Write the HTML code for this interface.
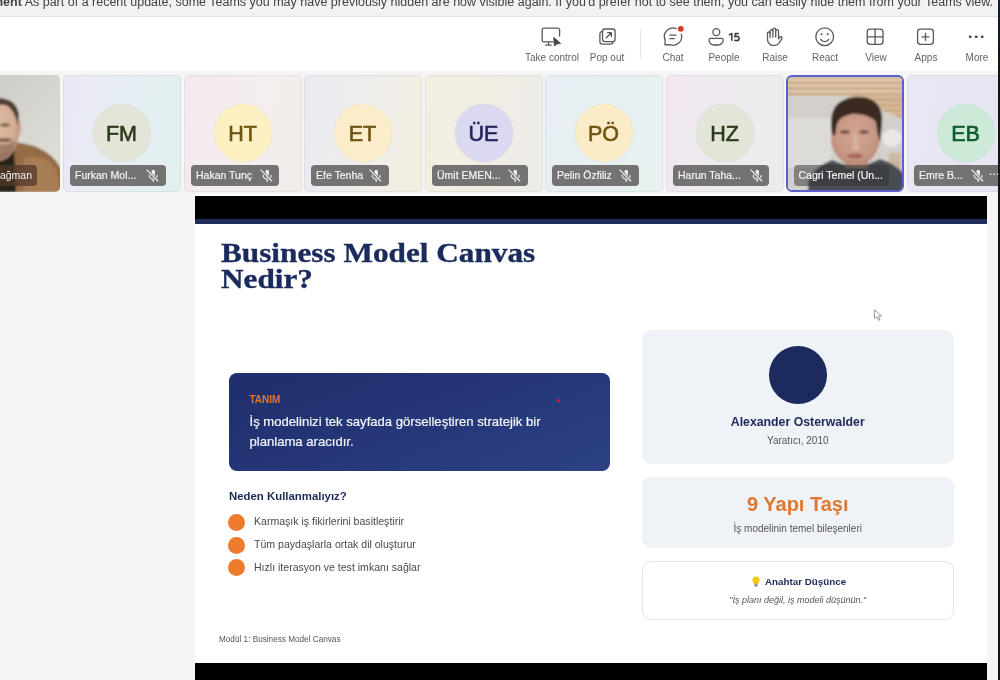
<!DOCTYPE html>
<html><head><meta charset="utf-8">
<style>
*{margin:0;padding:0;box-sizing:border-box}
html,body{width:1000px;height:680px;overflow:hidden;background:#f5f5f5;font-family:"Liberation Sans",sans-serif}
body>*{will-change:transform}
.abs{position:absolute}
#banner{left:0;top:0;width:998px;height:17px;background:#f2f2f2;border-bottom:1px solid #e1e1e1;overflow:hidden}
#banner span{position:absolute;left:-8px;top:-4.4px;font-size:12.5px;line-height:12.5px;color:#424242;white-space:nowrap}
#toolbar{left:0;top:17px;width:998px;height:54px;background:#fff}
.lbl{position:absolute;top:52px;width:80px;margin-left:-40px;text-align:center;font-size:10px;line-height:12px;color:#646464;white-space:nowrap}
#sep{left:640px;top:29px;width:1px;height:29px;background:#e6e6e6}
#rightline{left:997.8px;top:0;width:2.2px;height:680px;background:linear-gradient(180deg,#102038 0px,#141820 30px,#131313 80px,#141414 100%)}
.tile{position:absolute;top:75px;width:117.5px;height:117px;border-radius:5px;overflow:hidden;box-shadow:inset 0 0 0 1px rgba(0,0,0,0.05)}
.av{position:absolute;left:29.5px;top:28.5px;width:58px;height:58px;border-radius:50%;font-size:21.5px;-webkit-text-stroke:0.6px currentColor;text-align:center;line-height:60px;box-shadow:0 0 0 0.5px rgba(0,0,0,0.06)}
.pill{position:absolute;left:7px;top:89.5px;height:21px;border-radius:4px;background:#747272;color:#f4f4f4;-webkit-text-stroke:0.2px #f4f4f4;font-size:10.5px;line-height:21px;padding-left:5px;white-space:nowrap}
#slide{left:194.8px;top:194px;width:792.2px;height:486px;background:#fff;overflow:hidden}
#title{left:221px;top:240px;font-family:"Liberation Serif",serif;font-weight:bold;font-size:27px;line-height:26.3px;color:#1b2a5c;-webkit-text-stroke:0.35px #1b2a5c;transform-origin:0 0;transform:scaleX(1.157);white-space:nowrap}
#defbox{left:228.5px;top:373px;width:580.5px;height:97.5px;border-radius:8px;background:linear-gradient(160deg,#1f2e6b 0%,#253778 50%,#2c4183 100%)}
#defbox{width:380.5px}
#tanim{position:absolute;left:20.5px;top:21px;font-weight:bold;font-size:10px;color:#e5742f}
#deftext{position:absolute;left:20.5px;top:38.8px;font-size:13.1px;line-height:20px;color:#f4f5f8;-webkit-text-stroke:0.2px #f4f5f8}
#reddot{left:557px;top:399px;width:3px;height:3px;border-radius:50%;background:#e02020}
#neden{left:229px;top:489.5px;font-weight:bold;font-size:11.4px;color:#1e2a5a}
.bul{left:227.8px;width:17px;height:17px;border-radius:50%;background:#ee7a2b}
.bt{left:253.5px;font-size:10.55px;color:#4a4a4a;white-space:nowrap}
#footer{left:218.5px;top:634.5px;font-size:8.2px;color:#555;white-space:nowrap}
.card{left:642px;width:311.5px;border-radius:9px;background:#eff2f6}
#pcircle{left:769px;top:345.5px;width:57.5px;height:57.5px;border-radius:50%;background:#1c2a5e}
.ctext{left:642px;width:311.5px;text-align:center;white-space:nowrap}
</style></head><body>
<div id="banner" class="abs"><span><b>ment</b> As part of a recent update, some Teams you may have previously hidden are now visible again. If you'd prefer not to see them, you can easily hide them from your Teams view.</span></div>
<div id="toolbar" class="abs"></div>
<div id="sep" class="abs"></div>
<svg class="abs" style="left:0;top:0" width="1000" height="75" viewBox="0 0 1000 75">
 <g fill="none" stroke="#595959" stroke-width="1.3" stroke-linecap="round" stroke-linejoin="round">
  <!-- take control -->
  <path d="M553 41.8H543.8a1.6 1.6 0 0 1-1.6-1.6V29.8a1.6 1.6 0 0 1 1.6-1.6H558a1.6 1.6 0 0 1 1.6 1.6V36"/>
  <path d="M548.6 42v3M545.7 45.1h5.6"/>
  <!-- pop out -->
  <rect x="602.5" y="29" width="12.6" height="12.6" rx="2.4"/>
  <path d="M602.3 31.4a2.4 2.4 0 0 0-2.4 2.4v7.9a2.4 2.4 0 0 0 2.4 2.4h8.3a2.4 2.4 0 0 0 2.4-2.4"/>
  <path d="M606.3 37.8l5-5M607.6 32.6h3.8v3.8"/>
  <!-- chat -->
  <path d="M676.3 28.6A8.6 8.6 0 0 0 665.2 40.2L664.9 44.9L670.1 44.7A8.6 8.6 0 0 0 681.4 34.5"/>
  <path d="M669.8 35.1h6.2M669.8 38.6h4.4"/>
  <!-- people -->
  <circle cx="716.3" cy="32.1" r="3.5"/>
  <path d="M710.6 38.4h11a1.6 1.6 0 0 1 1.6 1.6a5 5 0 0 1-5 5h-4.2a5 5 0 0 1-5-5a1.6 1.6 0 0 1 1.6-1.6z"/>
  <!-- raise -->
  <path d="M767.5 39.6V33.3a1.3 1.3 0 0 1 2.6 0V31a1.4 1.4 0 0 1 2.8 0V29.6a1.4 1.4 0 0 1 2.8 0V31a1.4 1.4 0 0 1 2.8 0V38.8l1.1-1.5a1.3 1.3 0 0 1 2.2 1.4L779 43.2a5 5 0 0 1-4.2 2.2H773.4a5.9 5.9 0 0 1-5.9-5.8z"/>
  <path d="M770.1 33.3V37.4M772.9 31V37M775.7 31V37"/>
  <!-- react -->
  <circle cx="824.7" cy="36.7" r="8.9"/>
  <path d="M820.6 39.4a5 5 0 0 0 8.2 0"/>
  <!-- view -->
  <rect x="867.2" y="29.2" width="15.8" height="15.2" rx="2.8"/>
  <path d="M875.1 29.2v15.2M867.2 36.8h15.8"/>
  <!-- apps -->
  <rect x="917.6" y="29.2" width="15.8" height="15.2" rx="2.8"/>
  <path d="M925.5 33.2v7.2M921.9 36.8h7.2"/>
 </g>
 <path d="M553.7 37.3L560.6 43.5L557.4 43.8L554.4 45.9Z" fill="#454545" stroke="#454545" stroke-width="0.8" stroke-linejoin="round"/>
 <circle cx="680.8" cy="28.8" r="3.9" fill="#fff"/>
 <circle cx="680.8" cy="28.8" r="2.9" fill="#d83b20"/>
 <circle cx="821.6" cy="34.3" r="1.05" fill="#595959"/>
 <circle cx="827.8" cy="34.3" r="1.05" fill="#595959"/>
 <circle cx="970.2" cy="36.8" r="1.4" fill="#424242"/>
 <circle cx="976.2" cy="36.8" r="1.4" fill="#424242"/>
 <circle cx="982.2" cy="36.8" r="1.4" fill="#424242"/>
</svg>
<div class="lbl" style="left:551.5px">Take control</div>
<div class="lbl" style="left:607.3px">Pop out</div>
<div class="lbl" style="left:673.2px">Chat</div>
<div class="lbl" style="left:724.2px">People</div>
<svg class="abs" style="left:726px;top:30px" width="16" height="13" viewBox="726 30 16 13"><g fill="none" stroke="#404040" stroke-width="1.55" stroke-linejoin="round"><path d="M728.9 35.2L731.8 33.5V40.8"/><path d="M738.7 33.6H735.3L734.9 37Q735.6 36.3 736.7 36.3Q739.1 36.4 739.1 38.5Q739.1 40.6 736.6 40.6Q735.2 40.6 734.3 39.8"/></g></svg>
<div class="lbl" style="left:774.6px">Raise</div>
<div class="lbl" style="left:824.7px">React</div>
<div class="lbl" style="left:875.7px">View</div>
<div class="lbl" style="left:925.9px">Apps</div>
<div class="lbl" style="left:976.5px">More</div>

<!-- first partial video tile -->
<div class="tile" style="left:-58px;background:#d0cfc9;box-shadow:none">
 <svg class="abs" style="left:0;top:0" width="118" height="117" viewBox="-58 75 118 117">
  <defs><filter id="bl2" x="-10%" y="-10%" width="120%" height="120%"><feGaussianBlur stdDeviation="1.2"/></filter>
  <linearGradient id="wall2" x1="0" y1="0" x2="1" y2="1"><stop offset="0" stop-color="#c6c4bd"/><stop offset="0.5" stop-color="#d5d4ce"/><stop offset="1" stop-color="#e2e1db"/></linearGradient>
  <radialGradient id="skin2" cx="0.45" cy="0.4" r="0.6"><stop offset="0" stop-color="#e0bda6"/><stop offset="0.8" stop-color="#d2ab92"/><stop offset="1" stop-color="#b88d74"/></radialGradient></defs>
  <g filter="url(#bl2)">
   <rect x="-58" y="75" width="118" height="117" fill="url(#wall2)"/>
   <path d="M-20 192V160Q0 146 14 142Q34 144 46 152Q58 160 62 172V192Z" fill="#946a47"/>
   <path d="M24 192V158Q40 154 52 164Q60 174 60 192Z" fill="#a87c55"/>
   <path d="M-20 192V158L14 150L16 192Z" fill="#26221f"/>
   <ellipse cx="-2" cy="130" rx="21" ry="31" fill="url(#skin2)"/>
   <ellipse cx="18" cy="128" rx="3" ry="9" fill="#c99f86"/>
   <path d="M-22 118Q-20 98 0 98Q16 99 19 114L18 126Q15 112 8 106Q-4 102 -16 112Z" fill="#4e3f36"/>
   <path d="M-20 140Q-10 164 5 158Q13 154 15 140Q8 146 0 144Q-10 146 -20 140Z" fill="#7d5d4b" opacity="0.6"/>
   <ellipse cx="4" cy="140" rx="8" ry="2" fill="#6a4c3c" opacity="0.8"/>
   <ellipse cx="5" cy="125" rx="5" ry="2" fill="#8f6b5a"/>
  </g>
 </svg>
 <div class="abs" style="left:42px;top:89.5px;width:53px;height:21px;border-radius:4px;background:rgba(80,58,42,0.75);color:#f2f2f2;font-size:10.5px;line-height:21px;text-align:right;padding-right:5px">ağman</div>
</div>
<div class="tile" style="left:63.2px;background:linear-gradient(100deg,#ece6f4 0%,#e6eef4 45%,#e2f0ee 100%)">
<div class="av" style="background:#e2e5d8;color:#2c3a1c">FM</div>
<div class="pill" style="width:95.6px">Furkan Mol...<svg width="13" height="14" viewBox="-1 0 13 14" style="position:absolute;right:6.5px;top:4px"><rect x="4.5" y="0.7" width="3.4" height="7.2" rx="1.7" fill="#f2f2f2"/><g fill="none" stroke-linecap="round"><path d="M2.3 6a3.9 3.9 0 0 0 7.8 0.6M6.2 10.4v2" stroke="#f2f2f2" stroke-width="1.2"/><path d="M-0.2 0.8l11 11.2" stroke="#747272" stroke-width="2.6"/><path d="M-0.2 0.8l11 11.2" stroke="#f2f2f2" stroke-width="1.15"/></g></svg></div></div>
<div class="tile" style="left:183.7px;background:linear-gradient(100deg,#f4e9ef 0%,#f4eeee 60%,#f2ece8 100%)">
<div class="av" style="background:#fdf0c2;color:#6f5412">HT</div>
<div class="pill" style="width:88.3px">Hakan Tunç<svg width="13" height="14" viewBox="-1 0 13 14" style="position:absolute;right:6.5px;top:4px"><rect x="4.5" y="0.7" width="3.4" height="7.2" rx="1.7" fill="#f2f2f2"/><g fill="none" stroke-linecap="round"><path d="M2.3 6a3.9 3.9 0 0 0 7.8 0.6M6.2 10.4v2" stroke="#f2f2f2" stroke-width="1.2"/><path d="M-0.2 0.8l11 11.2" stroke="#747272" stroke-width="2.6"/><path d="M-0.2 0.8l11 11.2" stroke="#f2f2f2" stroke-width="1.15"/></g></svg></div></div>
<div class="tile" style="left:304.2px;background:linear-gradient(100deg,#e9ebf3 0%,#f0eee9 60%,#f4eee0 100%)">
<div class="av" style="background:#fbedca;color:#6f5412">ET</div>
<div class="pill" style="width:77.5px">Efe Tenha<svg width="13" height="14" viewBox="-1 0 13 14" style="position:absolute;right:6.5px;top:4px"><rect x="4.5" y="0.7" width="3.4" height="7.2" rx="1.7" fill="#f2f2f2"/><g fill="none" stroke-linecap="round"><path d="M2.3 6a3.9 3.9 0 0 0 7.8 0.6M6.2 10.4v2" stroke="#f2f2f2" stroke-width="1.2"/><path d="M-0.2 0.8l11 11.2" stroke="#747272" stroke-width="2.6"/><path d="M-0.2 0.8l11 11.2" stroke="#f2f2f2" stroke-width="1.15"/></g></svg></div></div>
<div class="tile" style="left:424.7px;background:linear-gradient(100deg,#f3efdf 0%,#f1ede4 60%,#ecebea 100%)">
<div class="av" style="background:#dbd8f2;color:#24265a">ÜE</div>
<div class="pill" style="width:95.8px">Ümit EMEN...<svg width="13" height="14" viewBox="-1 0 13 14" style="position:absolute;right:6.5px;top:4px"><rect x="4.5" y="0.7" width="3.4" height="7.2" rx="1.7" fill="#f2f2f2"/><g fill="none" stroke-linecap="round"><path d="M2.3 6a3.9 3.9 0 0 0 7.8 0.6M6.2 10.4v2" stroke="#f2f2f2" stroke-width="1.2"/><path d="M-0.2 0.8l11 11.2" stroke="#747272" stroke-width="2.6"/><path d="M-0.2 0.8l11 11.2" stroke="#f2f2f2" stroke-width="1.15"/></g></svg></div></div>
<div class="tile" style="left:545.2px;background:linear-gradient(100deg,#e8eef4 0%,#e6f0f2 60%,#e8f2f0 100%)">
<div class="av" style="background:#fbecc8;color:#6f5412">PÖ</div>
<div class="pill" style="width:86.8px">Pelin Özfiliz<svg width="13" height="14" viewBox="-1 0 13 14" style="position:absolute;right:6.5px;top:4px"><rect x="4.5" y="0.7" width="3.4" height="7.2" rx="1.7" fill="#f2f2f2"/><g fill="none" stroke-linecap="round"><path d="M2.3 6a3.9 3.9 0 0 0 7.8 0.6M6.2 10.4v2" stroke="#f2f2f2" stroke-width="1.2"/><path d="M-0.2 0.8l11 11.2" stroke="#747272" stroke-width="2.6"/><path d="M-0.2 0.8l11 11.2" stroke="#f2f2f2" stroke-width="1.15"/></g></svg></div></div>
<div class="tile" style="left:665.7px;background:linear-gradient(100deg,#f1e6f1 0%,#eeebef 50%,#ececec 100%)">
<div class="av" style="background:#e2e5d8;color:#2c3a1c">HZ</div>
<div class="pill" style="width:96.3px">Harun Taha...<svg width="13" height="14" viewBox="-1 0 13 14" style="position:absolute;right:6.5px;top:4px"><rect x="4.5" y="0.7" width="3.4" height="7.2" rx="1.7" fill="#f2f2f2"/><g fill="none" stroke-linecap="round"><path d="M2.3 6a3.9 3.9 0 0 0 7.8 0.6M6.2 10.4v2" stroke="#f2f2f2" stroke-width="1.2"/><path d="M-0.2 0.8l11 11.2" stroke="#747272" stroke-width="2.6"/><path d="M-0.2 0.8l11 11.2" stroke="#f2f2f2" stroke-width="1.15"/></g></svg></div></div>

<!-- cagri video tile -->
<div class="tile" style="left:786.2px;background:#d3d0cb;box-shadow:none;border:2.2px solid #5d60cb;border-radius:6px">
 <svg class="abs" style="left:-2.2px;top:-2.2px" width="118" height="117" viewBox="786 75 118 117">
  <defs><filter id="bl" x="-10%" y="-10%" width="120%" height="120%"><feGaussianBlur stdDeviation="1.1"/></filter>
  <pattern id="wood" width="10" height="5.6" patternUnits="userSpaceOnUse"><rect width="10" height="5.6" fill="#c4a27e"/><rect width="10" height="3.4" fill="#e0cbb0"/></pattern>
  <radialGradient id="skin" cx="0.5" cy="0.45" r="0.6"><stop offset="0" stop-color="#d2a593"/><stop offset="0.7" stop-color="#c69784"/><stop offset="1" stop-color="#b38472"/></radialGradient></defs>
  <g filter="url(#bl)">
   <rect x="786" y="75" width="118" height="117" fill="#d3d0cb"/>
   <rect x="786" y="118" width="45" height="50" fill="#dddbd7"/>
   <path d="M786 77H904V120L850 96H786Z" fill="url(#wood)"/>
   <path d="M850 95L904 119V96Z" fill="#c9a984" opacity="0.5"/>
   <ellipse cx="892" cy="138" rx="10" ry="9" fill="#e9e7e3"/>
   <rect x="889" y="153" width="12" height="22" fill="#c9ad90" opacity="0.7"/>
   <path d="M808 192V182Q812 168 832 160L845 165H866L880 159Q896 164 904 174V192Z" fill="#4a4d52"/>
   <path d="M845 158Q856 172 868 158V168H845Z" fill="#a98170"/>
   <ellipse cx="855.5" cy="137" rx="24.5" ry="28.5" fill="url(#skin)"/>
   <path d="M832 134Q828 110 840 102Q852 94 868 98Q884 104 882 124L880 142Q877 134 876 122Q868 113 852 114Q840 116 837 124L835 136Z" fill="#3a2a22"/>
   <ellipse cx="845" cy="132" rx="5" ry="2" fill="#7d574b"/>
   <ellipse cx="864" cy="132" rx="5" ry="2" fill="#7d574b"/>
   <path d="M852 135Q855 148 851 150H860Q858 145 858 135Z" fill="#d8b2a0"/>
   <ellipse cx="855" cy="156" rx="8" ry="2.6" fill="#a8685f"/>
  </g>
 </svg>
 <div class="abs" style="left:5.5px;top:87.5px;width:95px;height:21px;border-radius:4px;background:rgba(50,50,50,0.5);color:#f4f4f4;-webkit-text-stroke:0.2px #f4f4f4;font-size:10.5px;line-height:21px;padding-left:5px;white-space:nowrap">Cagri Temel (Un...</div>
</div>
<!-- EB tile -->
<div class="tile" style="left:906.7px;width:100px;background:linear-gradient(100deg,#e8e7f3 0%,#e6e6f2 100%)">
 <div class="av" style="left:29.5px;background:#cdead9;color:#0f5a2c">EB</div>
 <div class="pill" style="width:90px">Emre B...<svg width="13" height="14" viewBox="-1 0 13 14" style="position:absolute;left:57px;top:4px"><rect x="4.5" y="0.7" width="3.4" height="7.2" rx="1.7" fill="#f2f2f2"/><g fill="none" stroke-linecap="round"><path d="M2.3 6a3.9 3.9 0 0 0 7.8 0.6M6.2 10.4v2" stroke="#f2f2f2" stroke-width="1.2"/><path d="M-0.2 0.8l11 11.2" stroke="#747272" stroke-width="2.6"/><path d="M-0.2 0.8l11 11.2" stroke="#f2f2f2" stroke-width="1.15"/></g></svg><span style="position:absolute;left:75px;top:-4px;font-size:11px;letter-spacing:0.5px">...</span></div>
</div>

<div id="slide" class="abs">
 <div class="abs" style="left:0;top:2px;width:792.2px;height:22.5px;background:#000"></div>
 <div class="abs" style="left:0;top:24.5px;width:792.2px;height:5px;background:#1f2c5e"></div>
 <div class="abs" style="left:0;top:469px;width:792.2px;height:20px;background:#000"></div>
</div>
<div id="title" class="abs">Business Model Canvas<br>Nedir?</div>
<div id="defbox" class="abs"><div id="tanim">TANIM</div><div id="deftext">İş modelinizi tek sayfada görselleştiren stratejik bir<br>planlama aracıdır.</div></div>
<div id="reddot" class="abs"></div>
<div id="neden" class="abs">Neden Kullanmalıyız?</div>
<div class="bul abs" style="top:513.5px"></div><div class="bt abs" style="top:515px">Karmaşık iş fikirlerini basitleştirir</div>
<div class="bul abs" style="top:536.5px"></div><div class="bt abs" style="top:538px">Tüm paydaşlarla ortak dil oluşturur</div>
<div class="bul abs" style="top:559.2px"></div><div class="bt abs" style="top:560.5px">Hızlı iterasyon ve test imkanı sağlar</div>
<div id="footer" class="abs">Modül 1: Business Model Canvas</div>
<div class="card abs" style="top:329.5px;height:134px"></div>
<div id="pcircle" class="abs"></div>
<div class="ctext abs" style="top:414.6px;font-weight:bold;font-size:12.3px;color:#1e2a5a">Alexander Osterwalder</div>
<div class="ctext abs" style="top:435px;font-size:10px;color:#555">Yaratıcı, 2010</div>
<div class="card abs" style="top:477px;height:71px"></div>
<div class="ctext abs" style="top:492.5px;font-weight:bold;font-size:20px;color:#e0772f">9 Yapı Taşı</div>
<div class="ctext abs" style="top:522.5px;font-size:10px;color:#555">İş modelinin temel bileşenleri</div>
<div class="card abs" style="top:561px;height:58.5px;background:#fff;border:1.5px solid #dfe5ec"></div>
<div class="abs" style="left:765.2px;top:576px;font-weight:bold;font-size:9.8px;color:#1e2a5a;white-space:nowrap">Anahtar Düşünce</div><svg class="abs" style="left:751px;top:576px" width="10" height="11" viewBox="0 0 10 11"><circle cx="5" cy="4" r="3.6" fill="#f6c814"/><path d="M3 6.2h4v2.2H3z" fill="#f0b800"/><rect x="3.2" y="8.2" width="3.6" height="2.2" rx="0.8" fill="#8c8c8c"/></svg>
<div class="ctext abs" style="top:594.5px;font-style:italic;font-size:9px;color:#555">"İş planı değil, iş modeli düşünün."</div>

<svg class="abs" style="left:870px;top:305px" width="16" height="20" viewBox="870 305 16 20"><path d="M874.3 309.6L874.5 318.7L876.7 316.5L878.6 320.3L880 319.7L878.3 316H881.7Z" fill="#fff" stroke="#8c8c8c" stroke-width="0.9" stroke-linejoin="round"/></svg>
<div id="rightline" class="abs"></div>
</body></html>
